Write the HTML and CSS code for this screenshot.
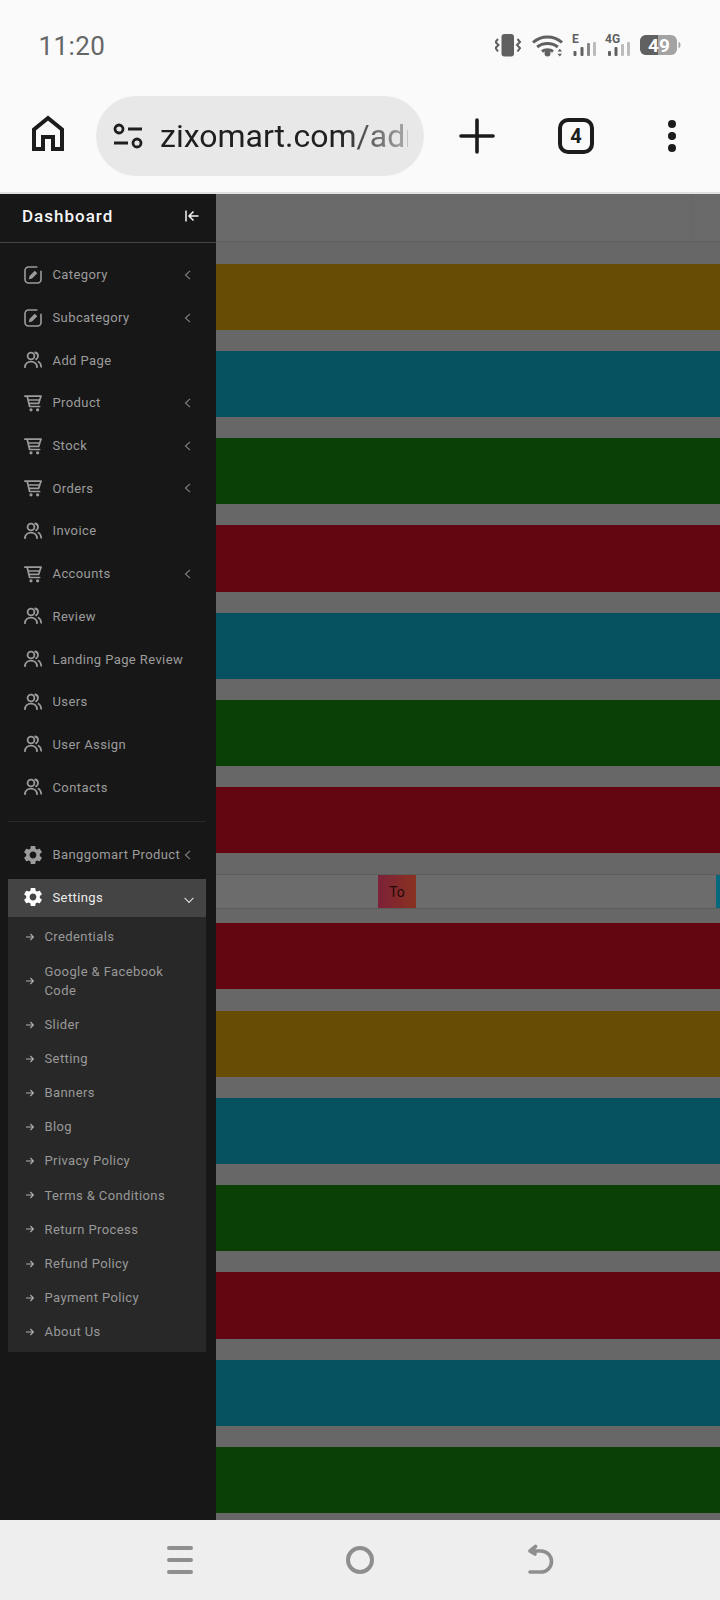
FILE: index.html
```html
<!DOCTYPE html>
<html lang="en">

<head>
  <meta charset="UTF-8" />
  <meta name="viewport" content="width=device-width, initial-scale=1.0" />
  <title>Dashboard</title>
  <link rel="stylesheet" href="styles.css">
</head>

<body>
  <svg class="sprites" width="0" height="0" aria-hidden="true">
    <symbol id="i-edit" viewBox="0 0 18 18">
      <path d="M12.800 1H4.500A3.500 3.500 0 0 0 1 4.500v9A3.500 3.500 0 0 0 4.500 17h9a3.500 3.500 0 0 0 3.500-3.500V5.200" fill="none" stroke="currentColor" stroke-width="1.600" stroke-linecap="round" />
      <path d="M4.800 13.200l.7-3.300 5.200-5.200 2.600 2.600-5.200 5.200z" fill="currentColor" />
    </symbol>
    <symbol id="i-users" viewBox="0 0 18 18">
      <circle cx="7" cy="5" r="3.400" fill="none" stroke="currentColor" stroke-width="1.800" />
      <path d="M1 16.200c0-3.500 2.600-5.600 6-5.600s6 2.100 6 5.600M11.200 1.500c1.800.4 2.800 1.800 2.800 3.500s-.8 2.800-1.900 3.400M14.600 10.800c1.400.8 2.400 2.600 2.600 5" fill="none" stroke="currentColor" stroke-width="1.800" stroke-linecap="round" />
    </symbol>
    <symbol id="i-cart" viewBox="0 0 18 18">
      <path d="M.8 2.200h16.300M3.200 2.200l2.400 10.300h10M4.200 6h11.400l1.500-3.800M5 9.400h9.600L15.800 6" fill="none" stroke="currentColor" stroke-width="1.700" stroke-linecap="round" stroke-linejoin="round" />
      <circle cx="7" cy="15.800" r="1.600" fill="currentColor" />
      <circle cx="13.600" cy="15.800" r="1.600" fill="currentColor" />
    </symbol>
    <symbol id="i-gear" viewBox="2.500 2.500 19 19">
      <path fill="currentColor" d="M19.140 12.940c.04-.3.06-.61.06-.94 0-.32-.02-.64-.07-.94l2.030-1.580c.18-.14.23-.41.12-.61l-1.920-3.320c-.12-.22-.37-.29-.59-.22l-2.390.96c-.5-.38-1.030-.7-1.620-.94l-.36-2.540c-.04-.24-.24-.41-.48-.41h-3.840c-.24 0-.43.17-.47.41l-.36 2.540c-.59.24-1.130.57-1.620.94l-2.390-.96c-.22-.08-.47 0-.59.22L2.740 8.870c-.12.21-.08.47.12.61l2.030 1.580c-.05.3-.09.63-.09.94s.02.64.07.94l-2.030 1.580c-.18.14-.23.41-.12.61l1.920 3.320c.12.22.37.29.59.22l2.390-.96c.5.38 1.030.7 1.620.94l.36 2.540c.05.24.24.41.48.41h3.840c.24 0 .44-.17.47-.41l.36-2.540c.59-.24 1.130-.56 1.620-.94l2.390.96c.22.08.47 0 .59-.22l1.920-3.320c.12-.22.07-.47-.12-.61l-2.010-1.580zM12 15.600c-1.980 0-3.600-1.620-3.600-3.600s1.620-3.600 3.600-3.600 3.600 1.620 3.600 3.600-1.620 3.600-3.600 3.600z" />
    </symbol>
    <symbol id="i-left" viewBox="0 0 7 10">
      <path d="M6 .8L1.500 5 6 9.200" fill="none" stroke="currentColor" stroke-width="1.100" />
    </symbol>
    <symbol id="i-arrow" viewBox="0 0 10 10">
      <path d="M1 5h7.400M5.400 2l3 3-3 3" fill="none" stroke="currentColor" stroke-width="1.100" />
    </symbol>
  </svg>

  <div class="status-bar">
    <span class="time">11:20</span>
    <svg class="status-icons" width="188" height="26" viewBox="-2 0 188 26">
      <!-- vibrate -->
      <g transform="translate(-1.500 0)">
        <rect x="6" y="1" width="12.500" height="22.500" rx="3" fill="#606060" />
        <path d="M2.500 5L0 8l3 3-3 3 2.500 3.500M22 5l2.500 3-3 3 3 3-2.500 3.500" transform="translate(0 1)" fill="none" stroke="#606060" stroke-width="2" />
      </g>
      <!-- wifi -->
      <path d="M36 9.500c8.200-7.400 20.800-7.400 29 0M40.200 14c5.700-4.800 14.900-4.800 20.600 0M45 18.500c3-2.400 8-2.400 11 0" fill="none" stroke="#606060" stroke-width="3" />
      <circle cx="50.500" cy="20.500" r="3" fill="#606060" />
      <path d="M60.500 18.500l2.300-2.800 2.300 2.800zM60.500 20.800l2.300 2.800 2.300-2.800z" fill="#606060" />
      <!-- sim 1 -->
      <text class="net-label" x="75" y="10">E</text>
      <rect x="76.500" y="18" width="3" height="5" rx="1" fill="#606060" />
      <rect x="83.500" y="14" width="3" height="9" rx="1" fill="#606060" />
      <rect x="90" y="10" width="3" height="13" rx="1" fill="#606060" opacity=".75" />
      <rect x="96" y="9" width="3" height="14" rx="1" fill="#bcbcbc" />
      <!-- sim 2 -->
      <text class="net-label" x="108" y="10">4G</text>
      <rect x="111" y="18" width="3" height="5" rx="1" fill="#606060" />
      <rect x="117.500" y="14" width="3" height="9" rx="1" fill="#606060" />
      <rect x="124" y="11" width="3" height="12" rx="1" fill="#bcbcbc" />
      <rect x="130" y="9" width="3" height="14" rx="1" fill="#bcbcbc" />
      <!-- battery -->
      <rect x="143" y="2" width="37" height="20" rx="6" fill="#a3a3a3" />
      <path d="M149 2h12v20h-12a6 6 0 0 1-6-6V8a6 6 0 0 1 6-6z" fill="#606060" />
      <path d="M181.500 8.500a4 4 0 0 1 0 7z" fill="#a3a3a3" />
      <text class="batt-label" x="162" y="18.500">49</text>
    </svg>
  </div>

  <div class="toolbar">
    <svg class="tool-btn" width="48" height="48" viewBox="0 0 48 48">
      <path d="M10 37V17.500L24 6l14 11.500V37h-9V25h-10v12z" fill="none" stroke="#1c1c1c" stroke-width="4" />
    </svg>
    <div class="url-pill">
      <svg class="tune" width="32" height="28" viewBox="0 0 32 28">
        <circle cx="7" cy="7" r="4" fill="none" stroke="#1f1f1f" stroke-width="2.800" />
        <path d="M16 7h14M2 21h14" stroke="#1f1f1f" stroke-width="3" />
        <circle cx="25" cy="21" r="4" fill="none" stroke="#1f1f1f" stroke-width="2.800" />
      </svg>
      <span class="url-text">zixomart.com/admin</span>
    </div>
    <svg class="tool-btn plus" width="48" height="48" viewBox="0 0 48 48">
      <path d="M8 24h32M24 8v32" stroke="#1c1c1c" stroke-width="3.600" stroke-linecap="round" />
    </svg>
    <div class="tab-count"><span>4</span></div>
    <svg class="tool-btn dots" width="48" height="48" viewBox="0 0 48 48">
      <circle cx="24" cy="12" r="4" fill="#1c1c1c" />
      <circle cx="24" cy="24" r="4" fill="#1c1c1c" />
      <circle cx="24" cy="36" r="4" fill="#1c1c1c" />
    </svg>
  </div>

  <div class="app">
    <aside class="sidebar">
      <div class="side-head">
        <span class="side-title">Dashboard</span>
        <svg class="collapse" width="14" height="12" viewBox="0 0 14 12">
          <path d="M1 .5v11M13.500 6H4.500M8.500 1.500L4 6l4.500 4.500" fill="none" stroke="#f2f2f2" stroke-width="1.500" />
        </svg>
      </div>

      <ul class="menu">
        <li class="menu-item"><svg class="ico"><use href="#i-edit" /></svg><span>Category</span><svg class="chev"><use href="#i-left" /></svg></li>
        <li class="menu-item"><svg class="ico"><use href="#i-edit" /></svg><span>Subcategory</span><svg class="chev"><use href="#i-left" /></svg></li>
        <li class="menu-item"><svg class="ico"><use href="#i-users" /></svg><span>Add Page</span></li>
        <li class="menu-item"><svg class="ico"><use href="#i-cart" /></svg><span>Product</span><svg class="chev"><use href="#i-left" /></svg></li>
        <li class="menu-item"><svg class="ico"><use href="#i-cart" /></svg><span>Stock</span><svg class="chev"><use href="#i-left" /></svg></li>
        <li class="menu-item"><svg class="ico"><use href="#i-cart" /></svg><span>Orders</span><svg class="chev"><use href="#i-left" /></svg></li>
        <li class="menu-item"><svg class="ico"><use href="#i-users" /></svg><span>Invoice</span></li>
        <li class="menu-item"><svg class="ico"><use href="#i-cart" /></svg><span>Accounts</span><svg class="chev"><use href="#i-left" /></svg></li>
        <li class="menu-item"><svg class="ico"><use href="#i-users" /></svg><span>Review</span></li>
        <li class="menu-item"><svg class="ico"><use href="#i-users" /></svg><span>Landing Page Review</span></li>
        <li class="menu-item"><svg class="ico"><use href="#i-users" /></svg><span>Users</span></li>
        <li class="menu-item"><svg class="ico"><use href="#i-users" /></svg><span>User Assign</span></li>
        <li class="menu-item"><svg class="ico"><use href="#i-users" /></svg><span>Contacts</span></li>
      </ul>

      <div class="side-divider"></div>

      <ul class="menu">
        <li class="menu-item"><svg class="ico"><use href="#i-gear" /></svg><span>Banggomart Product</span><svg class="chev"><use href="#i-left" /></svg></li>
      </ul>

      <div class="settings">
        <div class="settings-head">
          <svg class="ico"><use href="#i-gear" /></svg>
          <span>Settings</span>
          <svg class="chev-down" width="10" height="7" viewBox="0 0 10 7"><path d="M.6.8L5 5.400 9.400.8" fill="none" stroke="#dddddd" stroke-width="1.100" /></svg>
        </div>
        <ul class="submenu">
          <li class="sub-item"><svg class="sub-arrow"><use href="#i-arrow" /></svg><span>Credentials</span></li>
          <li class="sub-item"><svg class="sub-arrow"><use href="#i-arrow" /></svg><span>Google &amp; Facebook Code</span></li>
          <li class="sub-item"><svg class="sub-arrow"><use href="#i-arrow" /></svg><span>Slider</span></li>
          <li class="sub-item"><svg class="sub-arrow"><use href="#i-arrow" /></svg><span>Setting</span></li>
          <li class="sub-item"><svg class="sub-arrow"><use href="#i-arrow" /></svg><span>Banners</span></li>
          <li class="sub-item"><svg class="sub-arrow"><use href="#i-arrow" /></svg><span>Blog</span></li>
          <li class="sub-item"><svg class="sub-arrow"><use href="#i-arrow" /></svg><span>Privacy Policy</span></li>
          <li class="sub-item"><svg class="sub-arrow"><use href="#i-arrow" /></svg><span>Terms &amp; Conditions</span></li>
          <li class="sub-item"><svg class="sub-arrow"><use href="#i-arrow" /></svg><span>Return Process</span></li>
          <li class="sub-item"><svg class="sub-arrow"><use href="#i-arrow" /></svg><span>Refund Policy</span></li>
          <li class="sub-item"><svg class="sub-arrow"><use href="#i-arrow" /></svg><span>Payment Policy</span></li>
          <li class="sub-item"><svg class="sub-arrow"><use href="#i-arrow" /></svg><span>About Us</span></li>
        </ul>
      </div>
    </aside>

    <main class="content">
      <div class="table-head"><div class="head-cell"></div></div>
      <div class="band amber"></div>
      <div class="band teal"></div>
      <div class="band green"></div>
      <div class="band red"></div>
      <div class="band teal"></div>
      <div class="band green"></div>
      <div class="band red"></div>
      <div class="plain-row">
        <span class="to-cell">To</span>
        <span class="teal-edge"></span>
      </div>
      <div class="band red"></div>
      <div class="band amber"></div>
      <div class="band teal"></div>
      <div class="band green"></div>
      <div class="band red"></div>
      <div class="band teal"></div>
      <div class="band green"></div>
    </main>
  </div>

  <div class="nav-bar">
    <svg width="28" height="32" viewBox="0 0 28 32">
      <path d="M3 4h22M3 16h22M3 28h22" stroke="#8e8e8e" stroke-width="4" stroke-linecap="round" />
    </svg>
    <svg width="28" height="32" viewBox="0 0 28 32">
      <circle cx="14" cy="16" r="12" fill="none" stroke="#8e8e8e" stroke-width="4" />
    </svg>
    <svg width="28" height="32" viewBox="0 0 28 32">
      <path d="M4 7h11a10.500 10.500 0 0 1 0 21H4M9.500 2.500L4 7l5 3" fill="none" stroke="#8e8e8e" stroke-width="3.600" stroke-linecap="round" stroke-linejoin="round" />
    </svg>
  </div>
</body>

</html>
```

FILE: styles.css
```css
* {
  margin: 0;
  padding: 0;
  box-sizing: border-box;
  font-family: Roboto, "Liberation Sans", sans-serif;
}

html,
body {
  width: 720px;
  height: 1600px;
  overflow: hidden;
}

body {
  display: flex;
  flex-direction: column;
  background-color: #fafafa;
}

ul {
  list-style: none;
}

.sprites {
  position: absolute;
}

/* phone status bar */
.status-bar {
  height: 96px;
  flex-shrink: 0;
  padding: 33px 37px 0 38.5px;
  display: flex;
  justify-content: space-between;
  align-items: flex-start;
}

.time {
  font-size: 26px;
  line-height: 26px;
  color: #666;
  letter-spacing: 0.4px;
}

.net-label {
  font-size: 12px;
  font-weight: 700;
  fill: #606060;
}

.batt-label {
  font-size: 19px;
  font-weight: 700;
  fill: #fff;
  text-anchor: middle;
}

/* browser toolbar */
.toolbar {
  height: 98px;
  flex-shrink: 0;
  padding: 0 0 16px 24px;
  display: flex;
  align-items: center;
  border-bottom: 2px solid #e0e0e0;
}

.tool-btn {
  flex-shrink: 0;
}

.url-pill {
  width: 328px;
  height: 80px;
  margin-left: 24px;
  padding: 0 16px;
  border-radius: 40px;
  background-color: #e8e8e8;
  display: flex;
  align-items: center;
  gap: 16px;
  overflow: hidden;
}

.tune {
  flex-shrink: 0;
}

.url-text {
  font-size: 32px;
  color: #1f1f1f;
  white-space: nowrap;
  overflow: hidden;
  -webkit-mask-image: linear-gradient(90deg, #000 72%, rgba(0, 0, 0, 0.3) 100%);
  mask-image: linear-gradient(90deg, #000 72%, rgba(0, 0, 0, 0.3) 100%);
}

.plus {
  margin-left: 28.5px;
}

.tab-count {
  width: 36px;
  height: 36px;
  margin-left: 57.5px;
  border: 4px solid #1c1c1c;
  border-radius: 10px;
  display: flex;
  align-items: center;
  justify-content: center;
  font-size: 20px;
  font-weight: 700;
  color: #1c1c1c;
}

.dots {
  margin-left: 54px;
}

/* page */
.app {
  flex: 1;
  min-height: 0;
  display: flex;
}

.sidebar {
  width: 216px;
  flex-shrink: 0;
  background-color: #171717;
}

.side-head {
  height: 49px;
  padding: 0 17px 4px 22px;
  display: flex;
  align-items: center;
  justify-content: space-between;
  border-bottom: 1px solid #444;
}

.side-title {
  font-size: 17px;
  font-weight: 500;
  letter-spacing: 1px;
  color: #f5f5f5;
}

.menu {
  padding-top: 10.5px;
}

.menu-item {
  height: 42.7px;
  padding: 0 25px 0 24px;
  display: flex;
  align-items: center;
  font-size: 13px;
  letter-spacing: 0.4px;
  color: #9c9c9c;
  white-space: nowrap;
}

.ico {
  width: 18px;
  height: 18px;
  margin-right: 10.5px;
  flex-shrink: 0;
}

.chev {
  width: 7px;
  height: 10px;
  margin-left: auto;
  color: #808080;
}

.side-divider {
  height: 1px;
  margin: 12.5px 10px 0 8px;
  background-color: #2a2a2a;
}

.side-divider + .menu {
  padding-top: 11.5px;
}

.settings {
  width: 198px;
  margin: 3px 0 0 8px;
  background-color: #282828;
}

.settings-head {
  height: 38px;
  padding: 0 12px 2px 16px;
  display: flex;
  align-items: center;
  background-color: #444;
  font-size: 13px;
  letter-spacing: 0.4px;
  color: #ececec;
}

.settings-head .ico {
  color: #fff;
}

.chev-down {
  margin: 6px 0 0 auto;
}

.submenu {
  padding: 3px 16px 3px 16.5px;
}

.sub-item {
  padding: 7.3px 0;
  display: flex;
  align-items: center;
  font-size: 13px;
  line-height: 19.5px;
  letter-spacing: 0.4px;
  color: #999;
}

.sub-arrow {
  width: 10px;
  height: 10px;
  margin-right: 10px;
  flex-shrink: 0;
  color: #b0b0b0;
}

/* dimmed table behind the sidebar */
.content {
  flex: 1;
  min-width: 0;
  background-color: #676767;
  overflow: hidden;
}

.table-head {
  height: 48px;
  margin-bottom: 21.5px;
  background-color: #696969;
  border-bottom: 1px solid #5e5e5e;
  display: flex;
  justify-content: flex-end;
}

.head-cell {
  width: 29px;
  border-left: 1px solid #646464;
}

.band {
  height: 66.2px;
  margin-bottom: 21.1px;
}

.amber {
  background-color: #664d03;
}

.teal {
  background-color: #055160;
}

.green {
  background-color: #0a3f06;
}

.red {
  background-color: #640512;
}

.plain-row {
  height: 35px;
  margin-bottom: 13.8px;
  display: flex;
  justify-content: space-between;
  background-color: #6c6c6c;
  border-top: 1px solid #5c5c5c;
  border-bottom: 1px solid #5c5c5c;
}

.to-cell {
  width: 38px;
  margin-left: 162px;
  display: flex;
  align-items: center;
  justify-content: center;
  background: linear-gradient(90deg, #7c2138, #8a3220);
  font-size: 14px;
  color: #240a0a;
}

.teal-edge {
  width: 4px;
  background-color: #05697d;
}

/* android nav bar */
.nav-bar {
  height: 80px;
  flex-shrink: 0;
  background-color: #eee;
  display: flex;
  align-items: center;
  justify-content: center;
  gap: 152px;
}
```
